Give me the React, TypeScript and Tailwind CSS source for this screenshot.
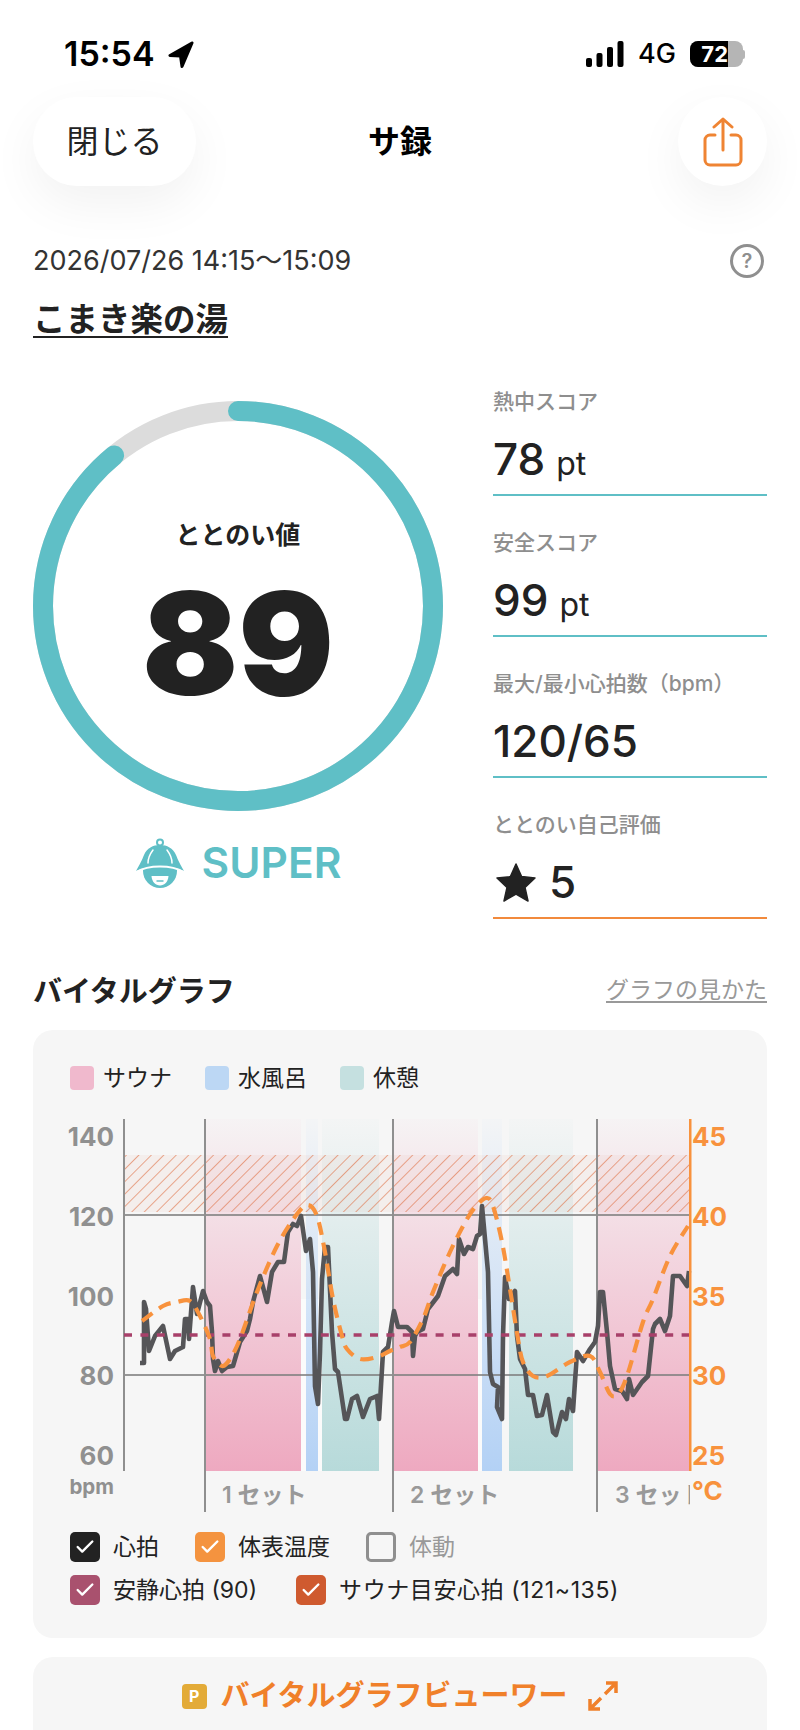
import { Check } from 'lucide-react';

const HEART_RATE = [
  [140, 1364], [144, 1364], [144, 1303], [146, 1310], [149, 1352], [155, 1337], [163, 1327], [170, 1360], [175, 1352],
  [183, 1348], [185, 1320], [188, 1320], [189, 1340], [193, 1288], [197, 1315], [203, 1292], [207, 1303], [210, 1307],
  [212, 1333], [213, 1360], [215, 1372], [218, 1362], [222, 1372], [227, 1368], [233, 1367], [240, 1343], [247, 1332],
  [250, 1320], [253, 1303], [260, 1277], [267, 1303], [272, 1273], [278, 1263], [284, 1263], [288, 1233], [293, 1225],
  [297, 1227], [301, 1217], [306, 1252], [310, 1240], [313, 1273], [315, 1387], [318, 1405], [320, 1353], [322, 1280],
  [325, 1248], [328, 1248], [332, 1333], [335, 1370], [338, 1373], [345, 1420], [347, 1420], [352, 1400], [357, 1397],
  [363, 1418], [370, 1400], [377, 1397], [379, 1420], [383, 1353], [388, 1348], [392, 1323], [394, 1312], [398, 1328],
  [407, 1328], [412, 1333], [413, 1357], [415, 1337], [417, 1333], [423, 1330], [428, 1310], [438, 1297], [445, 1277],
  [453, 1270], [457, 1275], [459, 1240], [464, 1255], [468, 1248], [473, 1250], [477, 1237], [480, 1235], [482, 1207],
  [488, 1273], [490, 1373], [493, 1385], [498, 1388], [497, 1408], [502, 1420], [503, 1337], [505, 1278], [509, 1300],
  [515, 1292], [517, 1337], [520, 1360], [525, 1370], [528, 1396], [533, 1396], [537, 1417], [542, 1416], [547, 1396],
  [553, 1433], [556, 1436], [562, 1413], [566, 1420], [569, 1400], [573, 1412], [577, 1353], [583, 1362], [590, 1350],
  [595, 1343], [598, 1327], [600, 1293], [603, 1293], [607, 1333], [610, 1367], [615, 1390], [622, 1392], [627, 1400],
  [629, 1380], [633, 1396], [642, 1383], [648, 1377], [653, 1330], [655, 1325], [660, 1320], [665, 1332], [670, 1317],
  [673, 1277], [680, 1277], [687, 1287], [689, 1272],
];

const SKIN_TEMP = [
  [142, 1322], [163, 1307], [177, 1303], [190, 1302], [200, 1317], [210, 1340], [213, 1357], [222, 1367], [230, 1360],
  [240, 1340], [257, 1293], [277, 1247], [297, 1215], [308, 1206], [317, 1217], [325, 1253], [333, 1300], [342, 1337],
  [347, 1350], [360, 1360], [377, 1358], [390, 1352], [400, 1348], [410, 1343], [423, 1320], [433, 1293], [450, 1253],
  [467, 1220], [478, 1205], [487, 1199], [493, 1207], [502, 1243], [510, 1290], [518, 1340], [523, 1363], [533, 1377],
  [547, 1377], [570, 1363], [590, 1357], [600, 1373], [610, 1395], [618, 1395], [627, 1377], [643, 1323], [653, 1300],
  [670, 1257], [688, 1227],
];

const SCORES = [
  { label: '熱中スコア', value: '78', unit: 'pt' },
  { label: '安全スコア', value: '99', unit: 'pt' },
  { label: '最大/最小心拍数（bpm）', value: '120/65', unit: '' },
];

const toLine = (pts: number[][]) => pts.map(p => p.join(',')).join(' ');

// catmull-rom through the sampled points, the temperature curve is smooth in the app
function toCurve(pts: number[][]) {
  let d = `M${pts[0][0]} ${pts[0][1]}`;
  for (let i = 0; i < pts.length - 1; i++) {
    const p0 = pts[i - 1] || pts[i];
    const p1 = pts[i];
    const p2 = pts[i + 1];
    const p3 = pts[i + 2] || p2;
    d += ` C${p1[0] + (p2[0] - p0[0]) / 6} ${p1[1] + (p2[1] - p0[1]) / 6} ${p2[0] - (p3[0] - p1[0]) / 6} ${p2[1] - (p3[1] - p1[1]) / 6} ${p2[0]} ${p2[1]}`;
  }
  return d;
}

function VitalChart() {
  return (
    <svg viewBox="33 1110 734 410" className="block w-[734px] h-[410px]">
      <defs>
        <linearGradient id="sauna" x1="0" y1="0" x2="0" y2="1">
          <stop offset="0" stopColor="#eea9c0" stopOpacity="0.04" />
          <stop offset="1" stopColor="#eea9c0" />
        </linearGradient>
        <linearGradient id="cold" x1="0" y1="0" x2="0" y2="1">
          <stop offset="0" stopColor="#b3d1f5" stopOpacity="0.04" />
          <stop offset="1" stopColor="#b3d1f5" />
        </linearGradient>
        <linearGradient id="rest" x1="0" y1="0" x2="0" y2="1">
          <stop offset="0" stopColor="#b7dada" stopOpacity="0.04" />
          <stop offset="1" stopColor="#b7dada" />
        </linearGradient>
        <pattern id="hatch" width="8.8" height="8.8" patternUnits="userSpaceOnUse" patternTransform="rotate(45)">
          <line x1="0" y1="0" x2="0" y2="8.8" stroke="#dd6a3c" strokeOpacity="0.75" strokeWidth="1.5" />
        </pattern>
        <clipPath id="plot">
          <rect x="124" y="1110" width="566" height="410" />
        </clipPath>
      </defs>

      <rect x="301" y="1300" width="21" height="172" fill="#ffffff" fillOpacity="0.5" />
      <rect x="478" y="1300" width="4" height="172" fill="#ffffff" fillOpacity="0.5" />
      <rect x="205" y="1120" width="96" height="352" fill="url(#sauna)" />
      <rect x="306" y="1120" width="12" height="352" fill="url(#cold)" />
      <rect x="322" y="1120" width="57" height="352" fill="url(#rest)" />
      <rect x="393" y="1120" width="85" height="352" fill="url(#sauna)" />
      <rect x="482" y="1120" width="20" height="352" fill="url(#cold)" />
      <rect x="509" y="1120" width="64" height="352" fill="url(#rest)" />
      <rect x="597" y="1120" width="93" height="352" fill="url(#sauna)" />

      <rect x="124" y="1156" width="566" height="57" fill="#e9b7a2" fillOpacity="0.12" />
      <rect x="124" y="1156" width="566" height="57" fill="url(#hatch)" />

      <line x1="124" y1="1216" x2="690" y2="1216" stroke="#7f7f7f" strokeOpacity="0.8" strokeWidth="2" />
      <line x1="124" y1="1376" x2="690" y2="1376" stroke="#7f7f7f" strokeOpacity="0.8" strokeWidth="2" />
      <line x1="124" y1="1120" x2="124" y2="1472" stroke="#8f8f8f" strokeWidth="2" />
      <line x1="205" y1="1120" x2="205" y2="1513" stroke="#8f8f8f" strokeWidth="2" />
      <line x1="393" y1="1120" x2="393" y2="1513" stroke="#8f8f8f" strokeWidth="2" />
      <line x1="597" y1="1120" x2="597" y2="1513" stroke="#8f8f8f" strokeWidth="2" />

      <polyline points={toLine(HEART_RATE)} fill="none" stroke="#555558" strokeWidth="4.6" strokeLinejoin="round" />
      <line x1="124" y1="1336" x2="690" y2="1336" stroke="#a8406a" strokeWidth="3.5" strokeDasharray="8 8.4" />
      <path d={toCurve(SKIN_TEMP)} fill="none" stroke="#f8923d" strokeWidth="4.2" strokeDasharray="13 8" />

      <g fill="#909090" fontSize="26" fontWeight="700" textAnchor="end">
        <text x="114" y="1147">140</text>
        <text x="114" y="1227">120</text>
        <text x="114" y="1307">100</text>
        <text x="114" y="1386">80</text>
        <text x="114" y="1466">60</text>
        <text x="114" y="1495" fontSize="20.5">bpm</text>
      </g>
      <g fill="#f8923d" fontSize="26" fontWeight="700">
        <text x="692" y="1147">45</text>
        <text x="692" y="1227">40</text>
        <text x="692" y="1307">35</text>
        <text x="692" y="1386">30</text>
        <text x="692" y="1466">25</text>
      </g>
      <g clipPath="url(#plot)" fill="#999999" fontSize="23" fontWeight="600">
        <text x="222" y="1504">1 セット</text>
        <text x="410" y="1504">2 セット</text>
        <text x="615" y="1504">3 セット</text>
      </g>
      <text x="692" y="1501" fill="#f8923d" fontSize="26" fontWeight="700">°C</text>
      <rect x="689" y="1120" width="2.5" height="352" fill="#f8923d" />
    </svg>
  );
}

function Toggle({ color, label, off, wide }: { color: string; label: string; off?: boolean; wide?: boolean }) {
  return (
    <div className="flex items-center gap-[13px]">
      {off ? (
        <span className="w-[30px] h-[30px] rounded-[5px] border-[3px] border-[#8f8f8f]" />
      ) : (
        <span className={`w-[30px] h-[30px] rounded-[5px] flex items-center justify-center text-white ${color}`}>
          <Check size={22} strokeWidth={2.6} />
        </span>
      )}
      <span className={`text-[23px] leading-[30px] ${wide ? 'tracking-[0.6px]' : ''} ${off ? 'text-[#999999]' : 'text-[#222222]'}`}>{label}</span>
    </div>
  );
}

function Swatch({ color, label }: { color: string; label: string }) {
  return (
    <div className="flex items-center gap-[9px]">
      <span className={`w-[24px] h-[24px] rounded-[4px] ${color}`} />
      <span className="text-[23px] leading-[24px] text-[#222222]">{label}</span>
    </div>
  );
}

export default function App() {
  return (
    <div className="w-[800px] h-[1730px] overflow-hidden bg-white text-[#222222] font-['Inter','Noto_Sans_CJK_JP',sans-serif]">
      {/* status bar */}
      <div className="h-[97px] pt-[39px] pl-[64px] pr-[55px] flex justify-between items-start">
        <div className="flex items-center gap-[13px]">
          <span className="text-[34px] leading-[30px] font-semibold text-black">15:54</span>
          <svg width="26" height="27" viewBox="0 0 26 27" className="mt-[1px]">
            <path d="M24 2 L2 14.5 L12.5 15 L14 25.5 Z" fill="#000" stroke="#000" strokeWidth="3" strokeLinejoin="round" />
          </svg>
        </div>
        <div className="flex items-center h-[30px]">
          <svg width="38" height="26" viewBox="0 0 38 26">
            <rect x="0" y="17" width="6" height="9" rx="2" fill="#000" />
            <rect x="10.5" y="12" width="6" height="14" rx="2" fill="#000" />
            <rect x="21" y="6" width="6" height="20" rx="2" fill="#000" />
            <rect x="31.5" y="0" width="6" height="26" rx="2" fill="#000" />
          </svg>
          <span className="ml-[14px] text-[27px] leading-[30px] font-medium text-black">4G</span>
          <div className="ml-[14px] w-[53px] h-[26px] rounded-[8px] overflow-hidden bg-[#b5b5b5] flex">
            <div className="w-[38px] bg-black text-white text-[22px] leading-[26px] font-bold text-right">72</div>
          </div>
          <span className="w-[2px] h-[9px] bg-[#b5b5b5] rounded-r-[2px]" />
        </div>
      </div>

      {/* nav */}
      <div className="h-[89px] px-[33px] flex items-center">
        <div className="w-[163px] h-[89px] rounded-[44px] bg-white shadow-[0_18px_50px_rgba(0,0,0,0.055)] flex items-center justify-center text-[32px] text-[#222222]">
          閉じる
        </div>
        <div className="flex-1 pr-[74px] text-center text-[32px] font-bold text-black">サ録</div>
        <div className="w-[89px] h-[89px] rounded-full bg-white shadow-[0_18px_50px_rgba(0,0,0,0.055)] flex items-center justify-center">
          <svg width="40" height="50" viewBox="0 0 40 50" fill="none" stroke="#ef8433" strokeWidth="3" strokeLinecap="round" strokeLinejoin="round">
            <path d="M20 33 V2 M11 10 L20 2 L29 10" />
            <path d="M12 18 H7 a5 5 0 0 0 -5 5 V43 a5 5 0 0 0 5 5 H33 a5 5 0 0 0 5 -5 V23 a5 5 0 0 0 -5 -5 H28" />
          </svg>
        </div>
      </div>

      {/* visit */}
      <div className="mt-[58px] pl-[33px] pr-[36px] h-[34px] flex items-center justify-between">
        <span className="text-[27px] text-[#333333]">2026/07/26 14:15～15:09</span>
        <span className="w-[34px] h-[34px] rounded-full border-[3px] border-[#8f8f8f] flex items-center justify-center text-[20px] font-semibold text-[#8f8f8f]">?</span>
      </div>
      <div className="mt-[23px] px-[33px] text-[32.5px] leading-[38px] font-semibold">
        <span className="underline underline-offset-[5px] decoration-2">こまき楽の湯</span>
      </div>

      {/* score */}
      <div className="mt-[50px] px-[33px] flex justify-between items-start">
        <div className="w-[410px] pt-[12px]">
          <div className="relative w-[410px] h-[410px]">
            <svg viewBox="0 0 410 410" className="w-[410px] h-[410px] -rotate-90">
              <circle cx="205" cy="205" r="195" fill="none" stroke="#dcdcdc" strokeWidth="20" />
              <circle cx="205" cy="205" r="195" fill="none" stroke="#5fbfc6" strokeWidth="20" strokeLinecap="round" strokeDasharray="1090.5 1225.2" />
            </svg>
            <div className="absolute inset-0 flex flex-col items-center">
              <span className="mt-[118px] text-[25px] leading-[32px] font-semibold">ととのい値</span>
              <span className="mt-[7px] text-[142px] leading-[170px] font-black">89</span>
            </div>
          </div>
          <div className="mt-[27px] flex items-center justify-center gap-[17px]">
            <svg width="50" height="50" viewBox="0 0 50 50">
              <circle cx="25" cy="33" r="17" fill="#5fbfc6" />
              <circle cx="25" cy="4.5" r="3" fill="none" stroke="#5fbfc6" strokeWidth="2" />
              <path d="M1 33 C5 26 7 22 9 17 C12 10 18 7 25 7 C32 7 38 10 41 17 C43 22 45 26 49 33 C42 30 34 28 25 28 C16 28 8 30 1 33 Z" fill="#5fbfc6" />
              <path d="M1 34 C8 30 16 28.5 25 28.5 C34 28.5 42 30 49 34" fill="none" stroke="#fff" strokeWidth="2" />
              <path d="M18 12 C15 16 13 21 13 25 M32 12 C35 16 37 21 37 25" fill="none" stroke="#fff" strokeWidth="1.5" strokeLinecap="round" />
              <path d="M16.5 38 H33.5 C33 44 29.5 47.5 25 47.5 C20.5 47.5 17 44 16.5 38 Z" fill="#fff" />
              <path d="M21.5 43 H28.5" stroke="#5fbfc6" strokeWidth="1.5" />
            </svg>
            <span className="text-[42.5px] leading-[50px] font-semibold text-[#5fbfc6]">SUPER</span>
          </div>
        </div>

        <div className="w-[274px] flex flex-col">
          {SCORES.map((s, i) => (
            <div key={s.label} className={`border-b-2 border-[#5fbfc6] flex flex-col justify-end pb-[9px] ${i === 0 ? 'h-[107px]' : 'h-[141px]'}`}>
              <div className="text-[21px] leading-[28px] font-medium text-[#8e8e8e]">{s.label}</div>
              <div className="mt-[17px] h-[52px] flex items-baseline gap-[11px] leading-[52px]">
                <span className="text-[44px] font-medium">{s.value}</span>
                {s.unit && <span className="text-[32px]">{s.unit}</span>}
              </div>
            </div>
          ))}
          <div className="border-b-2 border-[#f28a3c] h-[141px] flex flex-col justify-end pb-[9px]">
            <div className="text-[21px] leading-[28px] font-medium text-[#8e8e8e]">ととのい自己評価</div>
            <div className="mt-[17px] h-[52px] flex items-center gap-[12px] leading-[52px]">
              <svg width="42" height="40" viewBox="0 0 42 40" className="ml-[2px]">
                <path d="M21 2 L26.6 14.6 L40 16 L30 25.4 L33 39 L21 32 L9 39 L12 25.4 L2 16 L15.4 14.6 Z" fill="#222222" stroke="#222222" strokeLinejoin="round" strokeWidth="1.5" />
              </svg>
              <span className="text-[44px] font-medium">5</span>
            </div>
          </div>
        </div>
      </div>

      {/* vitals */}
      <div className="mt-[50px] px-[33px] h-[40px] flex items-center justify-between">
        <span className="text-[29px] font-bold pt-[5px]">バイタルグラフ</span>
        <span className="text-[23px] text-[#999999] underline underline-offset-[3px] pt-[2px]">グラフの見かた</span>
      </div>
      <div className="mt-[21px] mx-[33px] bg-[#f6f6f6] rounded-[20px] pt-[36px] pb-[33px]">
        <div className="pl-[37px] flex gap-[33px]">
          <Swatch color="bg-[#f0b9cd]" label="サウナ" />
          <Swatch color="bg-[#bcd7f4]" label="水風呂" />
          <Swatch color="bg-[#c5e0e0]" label="休憩" />
        </div>
        <div className="mt-[19px]">
          <VitalChart />
        </div>
        <div className="mt-[13px] pl-[37px] flex flex-col gap-[13px]">
          <div className="flex gap-[36px]">
            <Toggle color="bg-[#222222]" label="心拍" />
            <Toggle color="bg-[#f4933f]" label="体表温度" />
            <Toggle color="" label="体動" off />
          </div>
          <div className="flex gap-[39px]">
            <Toggle color="bg-[#a9516e]" label="安静心拍 (90)" />
            <Toggle color="bg-[#cf5a2f]" label="サウナ目安心拍 (121~135)" wide />
          </div>
        </div>
      </div>
      <div className="mt-[19px] mx-[33px] h-[110px] bg-[#f6f6f6] rounded-[20px] pt-[24px] flex items-start justify-center">
        <div className="flex items-center">
          <span className="w-[25px] h-[25px] rounded-[4px] bg-[#e3ab38] text-white text-[16px] leading-[25px] font-bold text-center">P</span>
          <span className="ml-[14px] text-[29px] leading-[30px] font-bold text-[#f0802a]">バイタルグラフビューワー</span>
          <svg width="30" height="30" viewBox="0 0 30 30" fill="none" stroke="#f0802a" strokeWidth="3.5" className="ml-[21px]">
            <path d="M17 13 L28 2 M18 2 H28 V12 M13 17 L2 28 M2 18 V28 H12" />
          </svg>
        </div>
      </div>
    </div>
  );
}
